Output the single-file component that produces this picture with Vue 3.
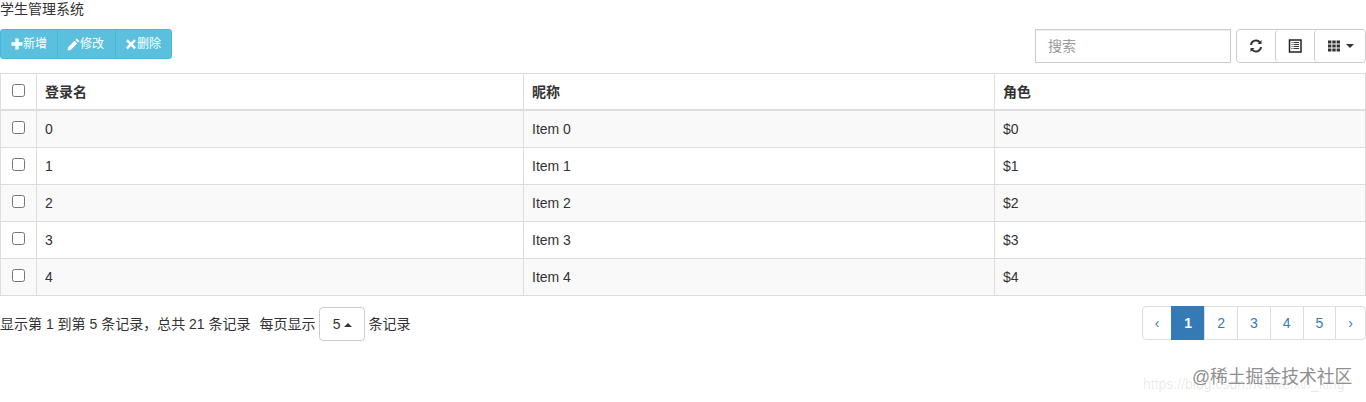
<script setup>
const rows = [0, 1, 2, 3, 4].map((i) => ({ id: i, name: `Item ${i}`, role: `$${i}` }))
const pages = [1, 2, 3, 4, 5]
</script>

<template>
  <div class="page">
    <div class="title">学生管理系统</div>

    <div class="toolbar">
      <div class="actions">
        <button type="button" class="btn-info">
          <svg width="12" height="12" viewBox="0 0 12 12"><path d="M4.300.500h3.400v3.800h3.800v3.400H7.700v3.800H4.300V7.700H.500V4.300h3.800z" fill="currentColor"/></svg>新增
        </button>
        <button type="button" class="btn-info">
          <svg width="13" height="13" viewBox="0 0 13 13"><path d="M9.800.500l2.700 2.700-1.400 1.400-2.700-2.700zM7.500 2.800l2.700 2.700-6.400 6.400-3.300.600.600-3.300z" fill="currentColor"/></svg>修改
        </button>
        <button type="button" class="btn-info">
          <svg width="12" height="12" viewBox="0 0 12 12"><path d="M2.800 1.200L6 4.400l3.200-3.200 1.800 1.800L7.800 6.200l3.200 3.200-1.800 1.800L6 8 2.800 11.200 1 9.400l3.200-3.200L1 3z" fill="currentColor"/></svg>删除
        </button>
      </div>
      <div class="tools">
        <input class="search" type="text" placeholder="搜索" />
        <div class="tool-group">
          <button type="button" class="tool tool--refresh">
            <svg width="14" height="14" viewBox="0 0 14 14" fill="none" stroke="#333" stroke-width="2"><path d="M2 6a5 5 0 0 1 9-2.500"/><path d="M12 8a5 5 0 0 1-9 2.500"/><path d="M12.500 1v4h-4z" fill="#333" stroke="none"/><path d="M1.500 13V9h4z" fill="#333" stroke="none"/></svg>
          </button>
          <button type="button" class="tool tool--list">
            <svg width="14" height="14" viewBox="0 0 14 14" fill="none"><rect x="1.500" y="1" width="11.500" height="12" stroke="#222" stroke-width="1.500"/><path d="M3.500 3.500h1M3.500 5.500h1M3.500 7.500h1M3.500 9.500h1M5.500 3.500h5.500M5.500 5.500h5.500M5.500 7.500h5.500M5.500 9.500h5.500" stroke="#333"/></svg>
          </button>
          <button type="button" class="tool tool--cols">
            <svg width="14" height="14" viewBox="0 0 14 14" fill="#333"><rect x="1" y="1.500" width="3.400" height="3"/><rect x="5.300" y="1.500" width="3.400" height="3"/><rect x="9.600" y="1.500" width="3.400" height="3"/><rect x="1" y="5.500" width="3.400" height="3"/><rect x="5.300" y="5.500" width="3.400" height="3"/><rect x="9.600" y="5.500" width="3.400" height="3"/><rect x="1" y="9.500" width="3.400" height="3"/><rect x="5.300" y="9.500" width="3.400" height="3"/><rect x="9.600" y="9.500" width="3.400" height="3"/></svg>
            <span class="caret"></span>
          </button>
        </div>
      </div>
    </div>

    <table class="grid">
      <colgroup>
        <col style="width: 36px" />
        <col style="width: 487px" />
        <col style="width: 471px" />
        <col />
      </colgroup>
      <thead>
        <tr>
          <th class="check"><input type="checkbox" /></th>
          <th>登录名</th>
          <th>昵称</th>
          <th>角色</th>
        </tr>
      </thead>
      <tbody>
        <tr v-for="row in rows" :key="row.id">
          <td class="check"><input type="checkbox" /></td>
          <td>{{ row.id }}</td>
          <td>{{ row.name }}</td>
          <td>{{ row.role }}</td>
        </tr>
      </tbody>
    </table>

    <div class="footer">
      <div class="info">
        <span>显示第 1 到第 5 条记录，总共 21 条记录</span>
        <span class="per-page">每页显示</span>
        <button type="button" class="size">5 <span class="caret caret--up"></span></button>
        <span>条记录</span>
      </div>
      <ul class="pager">
        <li><a>‹</a></li>
        <li v-for="p in pages" :key="p" :class="{ active: p === 1 }"><a>{{ p }}</a></li>
        <li><a>›</a></li>
      </ul>
    </div>

    <div class="mark">
      <span class="mark__url">https://blog.csdn.net/weixin_king</span>
      <span class="mark__name">@稀土掘金技术社区</span>
    </div>
  </div>
</template>

<style scoped>
.page {
  position: relative;
  height: 402px;
  overflow: hidden;
  font-family: "Liberation Sans", "Noto Sans CJK SC", sans-serif;
  font-size: 14px;
  line-height: 20px;
  color: #333;
  background: #fff;
}

.title {
  height: 18px;
  line-height: 18px;
}

.toolbar {
  display: flex;
  justify-content: space-between;
  align-items: flex-start;
  margin-top: 11px;
}

.actions {
  display: flex;
  height: 30px;
  box-sizing: border-box;
  width: 172px;
  border-radius: 3px;
  overflow: hidden;
  background: #5bc0de;
  border: 1px solid #46b8da;
}

.btn-info {
  display: flex;
  align-items: center;
  height: 28px;
  padding: 0 10px;
  border: 0;
  border-left: 1px solid #46b8da;
  background: transparent;
  color: #fff;
  font: inherit;
  font-size: 12px;
}

.btn-info:first-child { border-left: 0; }
.btn-info:nth-child(2) { padding: 0 11px 0 9px; }
.btn-info:last-child { padding-left: 9px; }

.tools {
  display: flex;
  gap: 5px;
}

.search {
  box-sizing: border-box;
  width: 196px;
  height: 34px;
  padding: 6px 12px;
  border: 1px solid #ccc;
  outline: none;
  font: inherit;
  color: #555;
  box-shadow: inset 0 1px 1px rgba(0, 0, 0, 0.075);
}

.search::placeholder { color: #999; }

.tool-group {
  display: flex;
  height: 34px;
  border: 1px solid #ccc;
  border-radius: 4px;
  box-sizing: border-box;
}

.tool {
  display: flex;
  align-items: center;
  justify-content: center;
  height: 32px;
  padding: 0;
  border: 0;
  border-left: 1px solid #ccc;
  background: #fff;
  border-radius: 4px;
}

.tool--refresh { width: 38px; border-left: 0; }
.tool--list { width: 39px; }
.tool--cols { width: 51px; gap: 5px; }

.caret {
  width: 0;
  height: 0;
  border-top: 4px solid #333;
  border-left: 4px solid transparent;
  border-right: 4px solid transparent;
}

.caret--up {
  display: inline-block;
  vertical-align: middle;
  border-top: 0;
  border-bottom: 4px solid #333;
}

.grid {
  width: 100%;
  margin-top: 10px;
  border-collapse: collapse;
  table-layout: fixed;
  border: 1px solid #ddd;
}

.grid th,
.grid td {
  box-sizing: border-box;
  padding: 8px;
  border: 1px solid #ddd;
  text-align: left;
  vertical-align: middle;
}

.grid th {
  height: 36px;
  padding: 8px 8px 7px;
  font-weight: 700;
  border-bottom: 2px solid #ddd;
}

.grid td { height: 37px; }

.grid tbody tr:nth-child(odd) { background: #f9f9f9; }

.grid .check {
  padding: 0;
  text-align: center;
}

.grid .check input {
  width: 13px;
  height: 13px;
  margin: 0 0 5px;
  vertical-align: middle;
}

.footer {
  display: flex;
  justify-content: space-between;
  align-items: flex-start;
  margin-top: 10px;
}

.info {
  display: flex;
  align-items: center;
  height: 36px;
}

.per-page { margin-left: 9px; margin-right: 4px; }

.size {
  box-sizing: border-box;
  width: 46px;
  height: 34px;
  margin-right: 3px;
  padding: 0;
  border: 1px solid #ccc;
  border-radius: 4px;
  background: #fff;
  color: #333;
  font: inherit;
}

.pager {
  display: flex;
  margin: 0;
  padding: 0;
  list-style: none;
}

.pager a {
  display: block;
  box-sizing: border-box;
  height: 34px;
  margin-left: -1px;
  padding: 6px 12px;
  text-align: center;
  border: 1px solid #ddd;
  color: #337ab7;
  background: #fff;
}

.pager li:first-child a { border-radius: 4px 0 0 4px; }
.pager li:last-child a { border-radius: 0 4px 4px 0; }

.pager .active a {
  background: #337ab7;
  border-color: #337ab7;
  color: #fff;
  font-weight: 700;
}

.mark {
  position: absolute;
  left: 1143px;
  top: 367px;
  width: 216px;
  height: 28px;
}

.mark__url {
  position: absolute;
  left: 0;
  top: 7px;
  white-space: nowrap;
  font-size: 14px;
  color: rgba(0, 0, 0, 0.1);
}

.mark__name {
  position: absolute;
  left: 49px;
  top: 0;
  white-space: nowrap;
  font-size: 17.800px;
  color: #8f8f8f;
}
</style>
